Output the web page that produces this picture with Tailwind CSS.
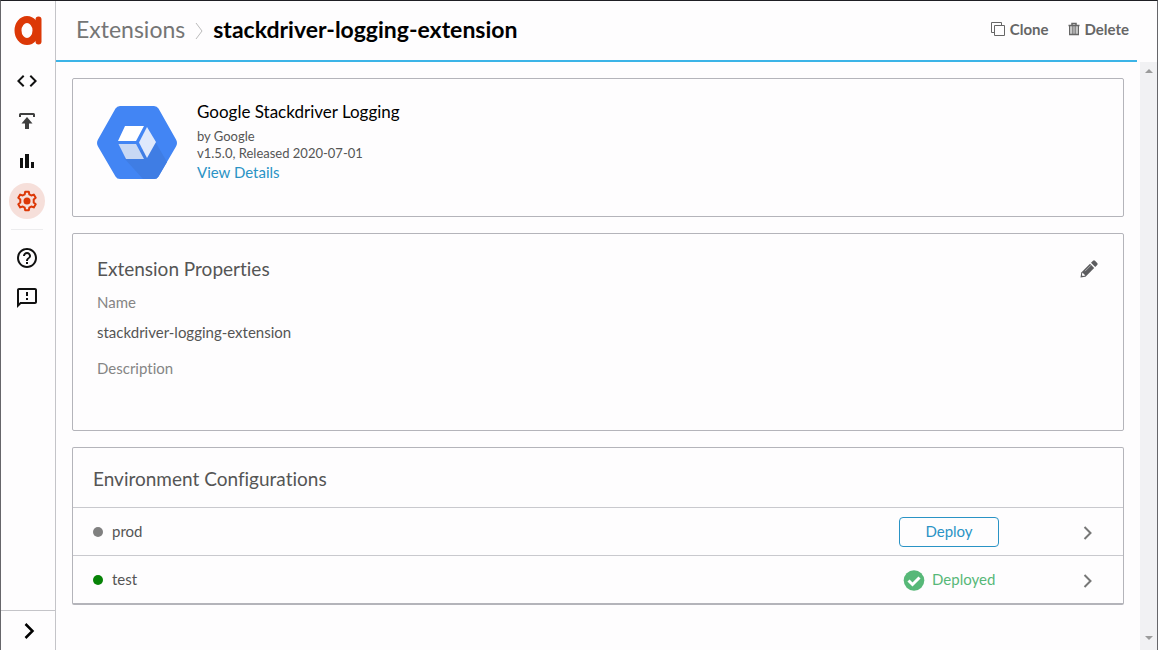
<!DOCTYPE html>
<html lang="en">
<head>
<meta charset="utf-8">
<meta name="viewport" content="width=device-width, initial-scale=1">
<title>stackdriver-logging-extension</title>
<script src="https://cdn.jsdelivr.net/npm/@tailwindcss/browser@4"></script>
</head>
<body class="bg-[#fefdfe] font-['Lato',sans-serif] text-[15px] leading-5 text-[#555] [font-variant-ligatures:none]">
<div class="flex h-screen border-x border-t border-x-[#66666a] border-t-[#1f1f24]">
  <aside class="flex w-[55px] shrink-0 flex-col border-r border-[#c4c4c8]">
    <a href="#" aria-label="Home" class="mt-[14px] flex h-8 justify-center">
      <svg class="h-8 w-8" viewBox="0 0 32 32" fill="none"><ellipse cx="15" cy="15.5" rx="9" ry="11" stroke="#dc3807" stroke-width="7"/><path d="M26.500 4.500v22" stroke="#dc3807" stroke-width="6" stroke-linecap="round"/></svg>
    </a>
    <nav class="mt-4 flex flex-1 flex-col items-center gap-1 pr-[2px]" aria-label="Main">
      <a href="#" aria-label="Develop" class="flex size-9 items-center justify-center"><svg class="size-6" viewBox="0 0 24 24" fill="#111"><path d="M9.4 16.6 4.8 12l4.6-4.600L8 6l-6 6 6 6 1.400-1.400zm5.200 0 4.600-4.600-4.600-4.600L16 6l6 6-6 6-1.400-1.400z"/></svg></a>
      <a href="#" aria-label="Publish" class="flex size-9 items-center justify-center"><svg class="size-6" viewBox="0 0 24 24" fill="none" stroke="#3f3f3f" stroke-width="2"><path d="M5 8V5.500Q5 5 5.500 5h13q.5 0 .5.500V8"/><path d="M12 20v-8" stroke-width="4"/><path d="M6.500 14.500 12 8l5.500 6.500z" fill="#3f3f3f" stroke="none"/></svg></a>
      <a href="#" aria-label="Analyze" class="flex size-9 items-center justify-center"><svg class="size-6" viewBox="0 0 24 24" fill="#111"><path d="M5 9h3v10H5zM10 5h4v14h-4zM16 13h3v6h-3z"/></svg></a>
      <a href="#" aria-label="Admin" aria-current="page" class="flex size-9 items-center justify-center rounded-full bg-[#f6dfda]"><svg class="size-6" viewBox="0 0 24 24" fill="none" stroke="#dc3807" stroke-width="2" stroke-linejoin="round"><path d="M9.700 5.300 10.200 2.700h3.600l.5 2.600 2 1.200 2.500-.9 1.900 3.200-2 1.700v3l2 1.700-1.900 3.200-2.500-.9-2 1.200-.5 2.600h-3.600l-.5-2.600-2-1.200-2.500.9-1.900-3.200 2-1.700v-3l-2-1.700 1.900-3.200 2.500.9z"/><circle cx="12" cy="12" r="3.500" fill="#dc3807" stroke="none"/></svg></a>
      <hr class="my-[6px] w-8 border-[#ececee]">
      <a href="#" aria-label="Help" class="flex size-9 items-center justify-center"><svg class="size-6" viewBox="0 0 24 24" fill="#111"><path d="M11 18h2v-2h-2v2zm1-16C6.480 2 2 6.480 2 12s4.480 10 10 10 10-4.480 10-10S17.520 2 12 2zm0 18c-4.410 0-8-3.590-8-8s3.590-8 8-8 8 3.590 8 8-3.590 8-8 8zm0-14c-2.210 0-4 1.790-4 4h2c0-1.100.9-2 2-2s2 .9 2 2c0 2-3 1.750-3 5h2c0-2.250 3-2.500 3-5 0-2.210-1.790-4-4-4z"/></svg></a>
      <a href="#" aria-label="Send feedback" class="flex size-9 items-center justify-center"><svg class="size-6" viewBox="0 0 24 24" fill="#111"><path d="M20 2H4c-1.100 0-1.990.9-1.990 2L2 22l4-4h14c1.100 0 2-.9 2-2V4c0-1.100-.9-2-2-2zm0 14H5.170L4 17.170V4h16v12zM11 12h2v2h-2zm0-6h2v4h-2z"/></svg></a>
    </nav>
    <button type="button" aria-label="Expand menu" class="flex h-10 items-center justify-center border-t border-[#c4c4c8]"><svg class="size-6" viewBox="0 0 24 24" fill="none" stroke="#000" stroke-width="2.500"><path d="m9.500 5 7 7-7 7"/></svg></button>
  </aside>

  <main class="flex min-w-0 flex-1 flex-col">
    <header class="mr-5 flex h-[61px] items-center border-b-2 border-[#3cb4e7] pr-2 pb-[3px] pl-5">
      <a href="#" class="text-[23px] leading-7 text-[#757575]">Extensions</a>
      <svg class="mx-2 mt-1 h-5 w-3" viewBox="0 0 12 20" fill="none" stroke="#bbb"><path d="m3 2 6 8-6 8"/></svg>
      <h1 class="text-[23px] leading-7 font-bold text-black">stackdriver-logging-extension</h1>
      <div class="ml-auto flex items-center gap-5 font-bold text-[#666]">
        <button type="button" class="flex items-center gap-1"><svg class="size-4" viewBox="0 0 16 16" fill="none" stroke="#666"><path d="M4.500 4.500h10v10h-10zM4.500 11.500h-3v-10h10v3"/></svg>Clone</button>
        <button type="button" class="flex items-center gap-1"><svg class="h-4 w-3" viewBox="0 0 12 16" fill="none" stroke="#666"><path d="M4 4V2.500h4V4M.5 4.500h11" stroke-width="1.500"/><path d="M1.700 5v8.500h8.600V5" stroke-width="1.400"/><path d="M4.200 5v8M6 5v8M7.800 5v8" stroke-width="1.100"/></svg>Delete</button>
      </div>
    </header>

    <div class="flex min-h-0 flex-1">
      <div class="flex min-w-0 flex-1 flex-col gap-4 overflow-hidden px-4 pt-4">
        <section class="flex gap-5 rounded-xs border border-[#b4b4ba] px-6 pt-[23px] pb-[34px]">
          <svg class="mt-1 h-[74px] w-20 shrink-0" viewBox="0 0 80 74" role="img" aria-label="Google Stackdriver">
            <path d="M23 0h34q3 0 4.500 2.500L79 33.500q2 3.500 0 7L61.500 70.500Q60 73 57 73H23q-3 0-4.500-2.500L1 40.500q-2-3.500 0-7L18.500 2.500Q20 0 23 0z" fill="#4285f4"/>
            <path d="M59 37 70 56l-8.500 14.500Q60 73 57 73H46L27 52z" fill="#3f7de4"/>
            <path d="M28 20h19l-8 15H21z" fill="#fff"/><path d="M21.500 38H39l8 15H29z" fill="#c8d8f4"/><path d="m50 21 9 15-9 16-8-15.500z" fill="#dfe9fc"/>
          </svg>
          <div>
            <h2 class="text-[17px] leading-5 text-black">Google Stackdriver Logging</h2>
            <p class="mt-[6px] text-[13px] leading-4">by Google</p>
            <p class="text-[13px] leading-[18px]">v1.5.0, Released 2020-07-01</p>
            <a href="#" class="block leading-5 text-[#2a93c5]">View Details</a>
          </div>
        </section>

        <section class="rounded-xs border border-[#b4b4ba] px-6 pt-[23px] pb-[52px]">
          <div class="flex items-center justify-between">
            <h2 class="text-[19px] leading-6">Extension Properties</h2>
            <button type="button" aria-label="Edit properties"><svg class="size-5" viewBox="0 0 20 20"><path d="m1.500 18.500.8-5L11 4.800l4.200 4.200-8.700 8.700z" fill="#5c5c5f"/><path d="m12 3.800 2-2q1-1 2 0l2.200 2.200q1 1 0 2l-2 2z" fill="#5c5c5f"/><path d="m3.400 13.600 3 3-2.600.500-.900-.900z" fill="#fefdfe"/><path d="m6 12.200 6-6" stroke="#aaa"/></svg></button>
          </div>
          <dl>
            <dt class="mt-[11px] text-[#858585]">Name</dt>
            <dd class="mt-[10px]">stackdriver-logging-extension</dd>
            <dt class="mt-4 text-[#858585]">Description</dt>
            <dd></dd>
          </dl>
        </section>

        <section class="rounded-xs border border-b-2 border-[#b4b4ba]">
          <h2 class="px-5 pt-[19px] pb-4 text-[19px] leading-6">Environment Configurations</h2>
          <div class="flex h-12 items-center border-t border-[#c9c9ce] pr-[19px] pl-5">
            <span class="mr-[9px] size-[10px] rounded-full bg-[#808080]"></span><span class="pb-[2px]">prod</span>
            <button type="button" class="mr-[73px] ml-auto flex h-[30px] w-[100px] items-center justify-center rounded-sm border border-[#2a93c5] pb-[2px] text-[#2a93c5]">Deploy</button>
            <button type="button" aria-label="Open prod" class="flex w-8 justify-center"><svg class="h-4 w-3" viewBox="0 0 12 16" fill="none" stroke="#777" stroke-width="2"><path d="m2.500 3 6 6-6 6"/></svg></button>
          </div>
          <div class="flex h-12 items-center border-t border-[#c9c9ce] pr-[19px] pl-5">
            <span class="mr-[9px] size-[10px] rounded-full bg-[#078307]"></span><span class="pb-[2px]">test</span>
            <span class="mr-[73px] ml-auto flex w-[100px] items-center gap-[7px] pl-1 text-[#57b878]"><svg class="size-[22px]" viewBox="0 0 22 22"><circle cx="11" cy="11.500" r="10.300" fill="#57b878"/><path d="m5.500 11.500 4 4 7-7" fill="none" stroke="#fff" stroke-width="3"/></svg><span class="pb-[2px]">Deployed</span></span>
            <button type="button" aria-label="Open test" class="flex w-8 justify-center"><svg class="h-4 w-3" viewBox="0 0 12 16" fill="none" stroke="#777" stroke-width="2"><path d="m2.500 3 6 6-6 6"/></svg></button>
          </div>
        </section>
      </div>
      <div class="flex w-[17px] flex-col items-center justify-between bg-[#f1f1f3] pt-[7px] pb-[10px]" aria-hidden="true">
        <svg class="h-1 w-2" viewBox="0 0 8 4"><path d="M0 4h8L4 0z" fill="#9b9b9b"/></svg>
        <svg class="h-1 w-2" viewBox="0 0 8 4"><path d="M0 0h8L4 4z" fill="#9b9b9b"/></svg>
      </div>
    </div>
  </main>
</div>
</body>
</html>
